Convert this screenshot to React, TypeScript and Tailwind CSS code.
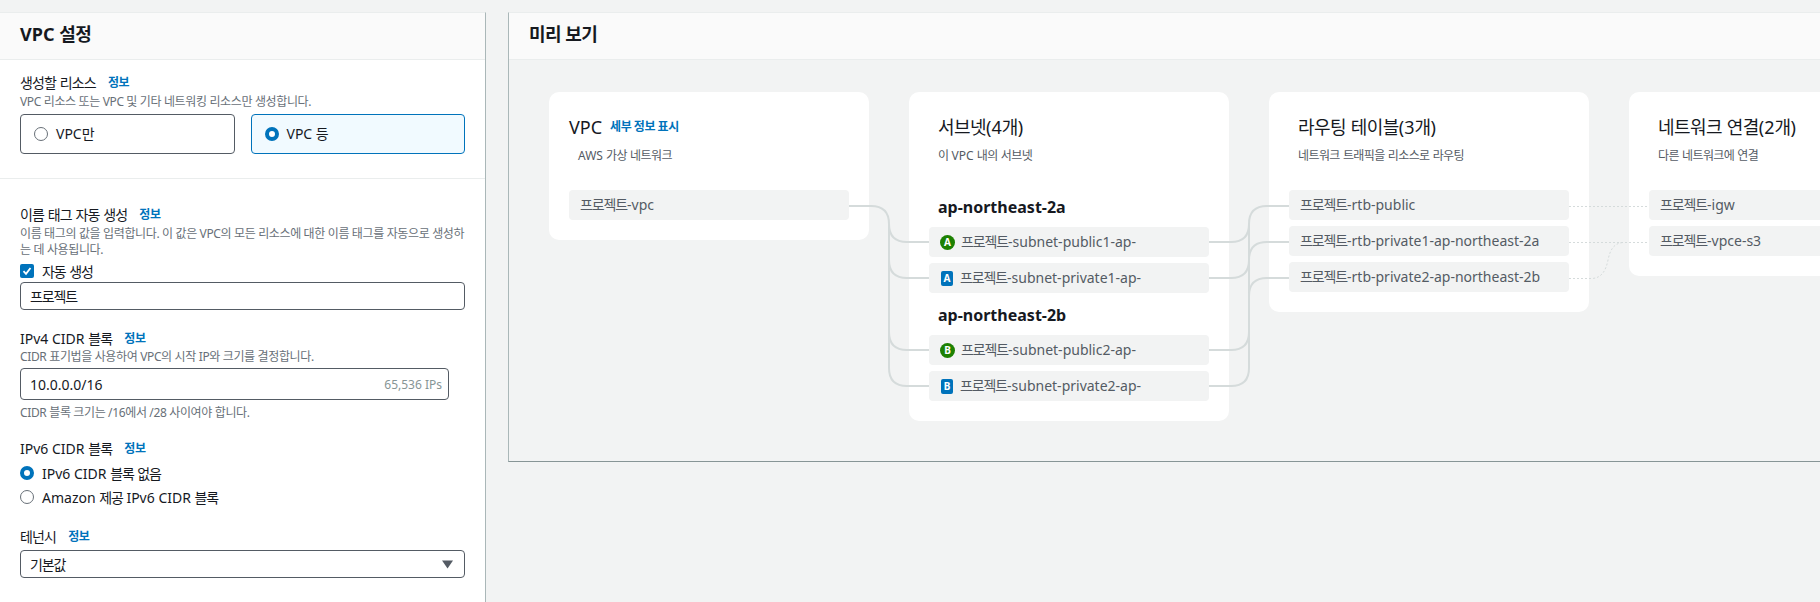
import type { ReactNode } from 'react';

// Hangul in the screenshot is set tighter than Noto's, latin runs are not
const Ko = ({ text, tight = 'tracking-[-0.08em]' }: { text: string; tight?: string }) => (
  <span>
    {text.split(/([가-힣]+)/).map((part, i) =>
      i % 2 === 1 ? (
        <span key={i} className={tight}>
          {part}
        </span>
      ) : (
        part
      ),
    )}
  </span>
);

const InfoLink = () => <a className="ml-3 text-xs font-bold text-[#0073bb] tracking-[-0.03em]">정보</a>;

const Label = ({ text, className = '' }: { text: string; className?: string }) => (
  <div className={`${className} h-5 flex items-center text-sm leading-5 text-[#16191f]`}>
    <Ko text={text} tight="tracking-[-0.06em]" />
    <InfoLink />
  </div>
);

const Hint = ({ text, className = '' }: { text: string; className?: string }) => (
  <p className={`${className} text-xs leading-4 tracking-[-0.03em] text-[#687078]`}>{text}</p>
);

const Radio = ({ checked }: { checked?: boolean }) =>
  checked ? (
    <span className="w-[14px] h-[14px] flex-none rounded-full border-[4px] border-[#0073bb] bg-white" />
  ) : (
    <span className="w-[14px] h-[14px] flex-none rounded-full border border-[#687078] bg-white" />
  );

const Row = ({ text, badge, className = '' }: { text: string; badge?: ReactNode; className?: string }) => (
  <div className={`${className} w-[280px] h-[30px] flex items-center rounded-sm bg-[#f2f3f3] pl-[11px] text-sm text-[#545b64] whitespace-nowrap`}>
    {badge}
    <Ko text={text} />
  </div>
);

const PublicBadge = ({ zone }: { zone: string }) => (
  <span className="w-[15px] h-[15px] mr-[6px] flex-none flex items-center justify-center rounded-full bg-[#1d8102] text-[10px] font-bold text-white">
    {zone}
  </span>
);

const PrivateBadge = ({ zone }: { zone: string }) => (
  <span className="w-[12px] h-[15px] ml-[1px] mr-[7px] flex-none flex items-center justify-center rounded-[2px] bg-[#0073bb] text-[10px] font-bold text-white">
    {zone}
  </span>
);

const Card = ({ title, desc, children, titleClass = 'pl-[9px]' }: { title: ReactNode; desc: string; children: ReactNode; titleClass?: string }) => (
  <div className="w-[320px] flex-none rounded-[10px] bg-white p-5">
    <div className={`${titleClass} h-[30px] flex items-center text-lg text-[#16191f] whitespace-nowrap`}>{title}</div>
    <p className="pl-[9px] mt-[6px] mb-[26px] text-xs leading-4 text-[#545b64]">
      <Ko text={desc} tight="tracking-[-0.05em]" />
    </p>
    {children}
  </div>
);

const Connectors = () => (
  <svg className="absolute left-0 top-0 pointer-events-none" width="1311" height="400" fill="none">
    <g transform="translate(-509 -60)">
      <g stroke="#d5dbdb" strokeWidth="2">
        <path d="M849 206H871C883 206 889 212 889 224V368C889 380 895 386 907 386H929" />
        <path d="M889 224C889 236 895 242 907 242H929" />
        <path d="M889 260C889 272 895 278 907 278H929" />
        <path d="M889 332C889 344 895 350 907 350H929" />
        <path d="M1209 242H1231C1243 242 1249 236 1249 224C1249 212 1255 206 1267 206H1289" />
        <path d="M1209 278H1231C1243 278 1249 272 1249 260C1249 248 1255 242 1267 242H1289" />
        <path d="M1209 350H1231C1243 350 1249 344 1249 332" />
        <path d="M1209 386H1231C1243 386 1249 380 1249 368V224" />
        <path d="M1249 296C1249 284 1255 278 1267 278H1289" />
      </g>
      <g stroke="#d5dbdb" strokeWidth="1" strokeDasharray="2 2">
        <path d="M1569 206.5H1649" />
        <path d="M1569 242.5H1649" />
        <path d="M1569 278.5H1592C1602 278 1606 270 1608 260C1610 250 1614 242.5 1624 242.5" />
      </g>
    </g>
  </svg>
);

export default function App() {
  return (
    <div className="w-[1820px] h-[602px] overflow-hidden flex items-start bg-[#f2f3f3] font-['Noto_Sans','Noto_Sans_CJK_KR',sans-serif]">
      <section className="w-[486px] h-[590px] mt-3 flex-none bg-white border-t border-r border-t-[#eaeded] border-r-[#aab7b8]">
        <header className="h-[47px] flex items-center px-5 pb-1 bg-[#fafafa] border-b border-[#eaeded]">
          <h2 className="text-lg font-bold text-[#16191f]">
            <Ko text="VPC 설정" tight="tracking-[-0.03em]" />
          </h2>
        </header>

        <div className="h-[119px] px-5 pt-[13px] border-b border-[#eaeded]">
          <Label text="생성할 리소스" />
          <Hint className="mt-px" text="VPC 리소스 또는 VPC 및 기타 네트워킹 리소스만 생성합니다." />
          <div className="mt-1 grid grid-cols-2 gap-4">
            <div className="h-10 flex items-center gap-2 pl-[13px] rounded-sm border border-[#545b64] text-sm text-[#16191f]">
              <Radio />
              <Ko text="VPC만" />
            </div>
            <div className="h-10 flex items-center gap-2 pl-[13px] rounded-sm border border-[#0073bb] bg-[#f1faff] text-sm text-[#16191f]">
              <Radio checked />
              <Ko text="VPC 등" />
            </div>
          </div>
        </div>

        <div className="px-5 pt-[26px]">
          <Label text="이름 태그 자동 생성" />
          <Hint className="mt-px" text="이름 태그의 값을 입력합니다. 이 값은 VPC의 모든 리소스에 대한 이름 태그를 자동으로 생성하는 데 사용됩니다." />
          <div className="mt-[3px] h-5 flex items-center gap-2 text-sm text-[#16191f]">
            <span className="w-[14px] h-[14px] flex-none flex items-center justify-center rounded-[2px] bg-[#0073bb]">
              <svg width="10" height="10" viewBox="0 0 10 10" fill="none">
                <path d="M1.5 5.2L4 7.8L8.5 2" stroke="white" strokeWidth="1.8" />
              </svg>
            </span>
            <span className="pt-px">
              <Ko text="자동 생성" />
            </span>
          </div>
          <div className="mt-px h-7 flex items-center px-[9px] pt-px rounded-sm border border-[#545b64] text-sm text-[#16191f]">
            <Ko text="프로젝트" />
          </div>

          <Label className="mt-[19px]" text="IPv4 CIDR 블록" />
          <Hint text="CIDR 표기법을 사용하여 VPC의 시작 IP와 크기를 결정합니다." />
          <div className="mt-[3px] w-[429px] h-8 flex items-center justify-between pl-[9px] pr-[6px] pt-px rounded-sm border border-[#545b64]">
            <span className="text-sm text-[#16191f]">10.0.0.0/16</span>
            <span className="text-xs text-[#879596]">65,536 IPs</span>
          </div>
          <Hint className="mt-[5px]" text="CIDR 블록 크기는 /16에서 /28 사이여야 합니다." />

          <Label className="mt-[18px]" text="IPv6 CIDR 블록" />
          <div className="mt-1 h-5 flex items-center gap-2 text-sm text-[#16191f]">
            <Radio checked />
            <span className="pt-px">
              <Ko text="IPv6 CIDR 블록 없음" />
            </span>
          </div>
          <div className="mt-1 h-5 flex items-center gap-2 text-sm text-[#16191f]">
            <Radio />
            <span className="pt-px">
              <Ko text="Amazon 제공 IPv6 CIDR 블록" />
            </span>
          </div>

          <Label className="mt-[20px]" text="테넌시" />
          <div className="mt-[3px] h-7 flex items-center justify-between pl-[9px] pr-[11px] pt-px rounded-sm border border-[#545b64] text-sm text-[#16191f]">
            <Ko text="기본값" />
            <svg width="11" height="9" viewBox="0 0 11 9">
              <path d="M0 0.5H11L5.5 8.5Z" fill="#545b64" />
            </svg>
          </div>
        </div>
      </section>

      <section className="ml-[22px] mt-3 flex-1 min-w-0 overflow-hidden bg-[#f2f3f3] border-t border-l border-b border-t-[#eaeded] border-l-[#aab7b8] border-b-[#879596]">
        <header className="h-[47px] flex items-center px-5 pb-1 bg-[#fafafa] border-b border-[#eaeded]">
          <h2 className="text-lg font-bold text-[#16191f]">
            <span className="tracking-[-0.03em]">미리 보기</span>
          </h2>
        </header>
        <div className="relative flex items-start gap-10 pl-10 pt-8 pb-10">
          <Card
            titleClass=""
            title={
              <>
                VPC
                <a className="ml-2 text-xs font-bold text-[#0073bb] tracking-[-0.04em]">세부 정보 표시</a>
              </>
            }
            desc="AWS 가상 네트워크"
          >
            <Row text="프로젝트-vpc" />
          </Card>

          <Card title={<Ko text="서브넷(4개)" tight="tracking-[-0.03em]" />} desc="이 VPC 내의 서브넷">
            <h3 className="mt-[31px] mb-2 pl-[9px] h-6 flex items-center text-base font-bold text-[#16191f]">ap-northeast-2a</h3>
            <Row badge={<PublicBadge zone="A" />} text="프로젝트-subnet-public1-ap-" />
            <Row className="mt-[6px]" badge={<PrivateBadge zone="A" />} text="프로젝트-subnet-private1-ap-" />
            <h3 className="mt-[10px] mb-2 pl-[9px] h-6 flex items-center text-base font-bold text-[#16191f]">ap-northeast-2b</h3>
            <Row badge={<PublicBadge zone="B" />} text="프로젝트-subnet-public2-ap-" />
            <Row className="mt-[6px]" badge={<PrivateBadge zone="B" />} text="프로젝트-subnet-private2-ap-" />
          </Card>

          <Card title={<Ko text="라우팅 테이블(3개)" tight="tracking-[-0.03em]" />} desc="네트워크 트래픽을 리소스로 라우팅">
            <Row text="프로젝트-rtb-public" />
            <Row className="mt-[6px]" text="프로젝트-rtb-private1-ap-northeast-2a" />
            <Row className="mt-[6px]" text="프로젝트-rtb-private2-ap-northeast-2b" />
          </Card>

          <Card title={<Ko text="네트워크 연결(2개)" tight="tracking-[-0.03em]" />} desc="다른 네트워크에 연결">
            <Row text="프로젝트-igw" />
            <Row className="mt-[6px]" text="프로젝트-vpce-s3" />
          </Card>

          <Connectors />
        </div>
      </section>
    </div>
  );
}
